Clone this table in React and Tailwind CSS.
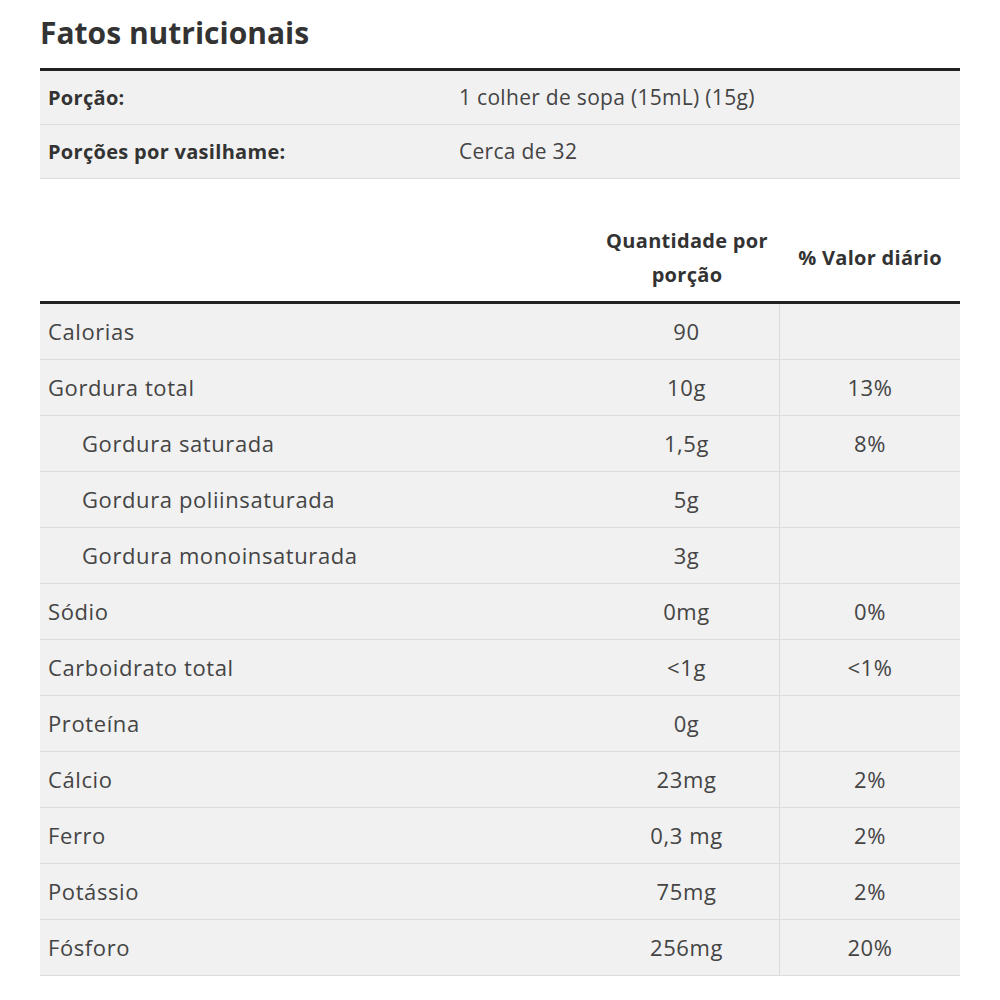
import React from 'react';

const servingInfo = [
  { label: 'Porção:', value: '1 colher de sopa (15mL) (15g)' },
  { label: 'Porções por vasilhame:', value: 'Cerca de 32' },
];

const nutrients = [
  { name: 'Calorias', amount: '90', dv: '' },
  { name: 'Gordura total', amount: '10g', dv: '13%' },
  { name: 'Gordura saturada', amount: '1,5g', dv: '8%', sub: true },
  { name: 'Gordura poliinsaturada', amount: '5g', dv: '', sub: true },
  { name: 'Gordura monoinsaturada', amount: '3g', dv: '', sub: true },
  { name: 'Sódio', amount: '0mg', dv: '0%' },
  { name: 'Carboidrato total', amount: '<1g', dv: '<1%' },
  { name: 'Proteína', amount: '0g', dv: '' },
  { name: 'Cálcio', amount: '23mg', dv: '2%' },
  { name: 'Ferro', amount: '0,3 mg', dv: '2%' },
  { name: 'Potássio', amount: '75mg', dv: '2%' },
  { name: 'Fósforo', amount: '256mg', dv: '20%' },
];

const App = () => {
  return (
    <div className="w-[1000px] h-[1000px] bg-white px-10 pt-[12px] text-[#3a3a3a]" style={{ fontFamily: '"Open Sans", sans-serif' }}>
      <h1 className="text-[30px] font-bold leading-[42px] text-[#333]">Fatos nutricionais</h1>

      {/* serving info */}
      <div className="mt-[14px] border-t-[3px] border-[#222]">
        {servingInfo.map((row) => (
          <div key={row.label} className="grid grid-cols-[419px_1fr] h-[54px] items-center bg-[#f1f1f1] border-b border-[#dcdcdc]">
            <div className="pl-2 font-bold text-[#333] text-[20px] tracking-[0.3px]">{row.label}</div>
            <div className="text-[#444] text-[21px] tracking-[0.3px]">{row.value}</div>
          </div>
        ))}
      </div>

      {/* nutrient table */}
      <div className="mt-[42px]">
        <div className="grid grid-cols-[554px_186px_180px] h-[80px] pb-[6px] items-center text-[20px] tracking-[0.3px] font-bold leading-[34px] text-[#333]">
          <div></div>
          <div className="text-center">Quantidade por<br />porção</div>
          <div className="text-center">% Valor diário</div>
        </div>
        <div className="border-t-[3px] border-[#222]">
          {nutrients.map((n) => (
            <div key={n.name} className="grid grid-cols-[554px_186px_180px] h-[56px] bg-[#f1f1f1] border-b border-[#dcdcdc] text-[22px] tracking-[0.6px] text-[#444]">
              <div className={`flex items-center ${n.sub ? 'pl-[42px]' : 'pl-2'}`}>{n.name}</div>
              <div className="flex items-center justify-center border-r border-[#dcdcdc]">{n.amount}</div>
              <div className="flex items-center justify-center">{n.dv}</div>
            </div>
          ))}
        </div>
      </div>
    </div>
  );
};

export default App;
